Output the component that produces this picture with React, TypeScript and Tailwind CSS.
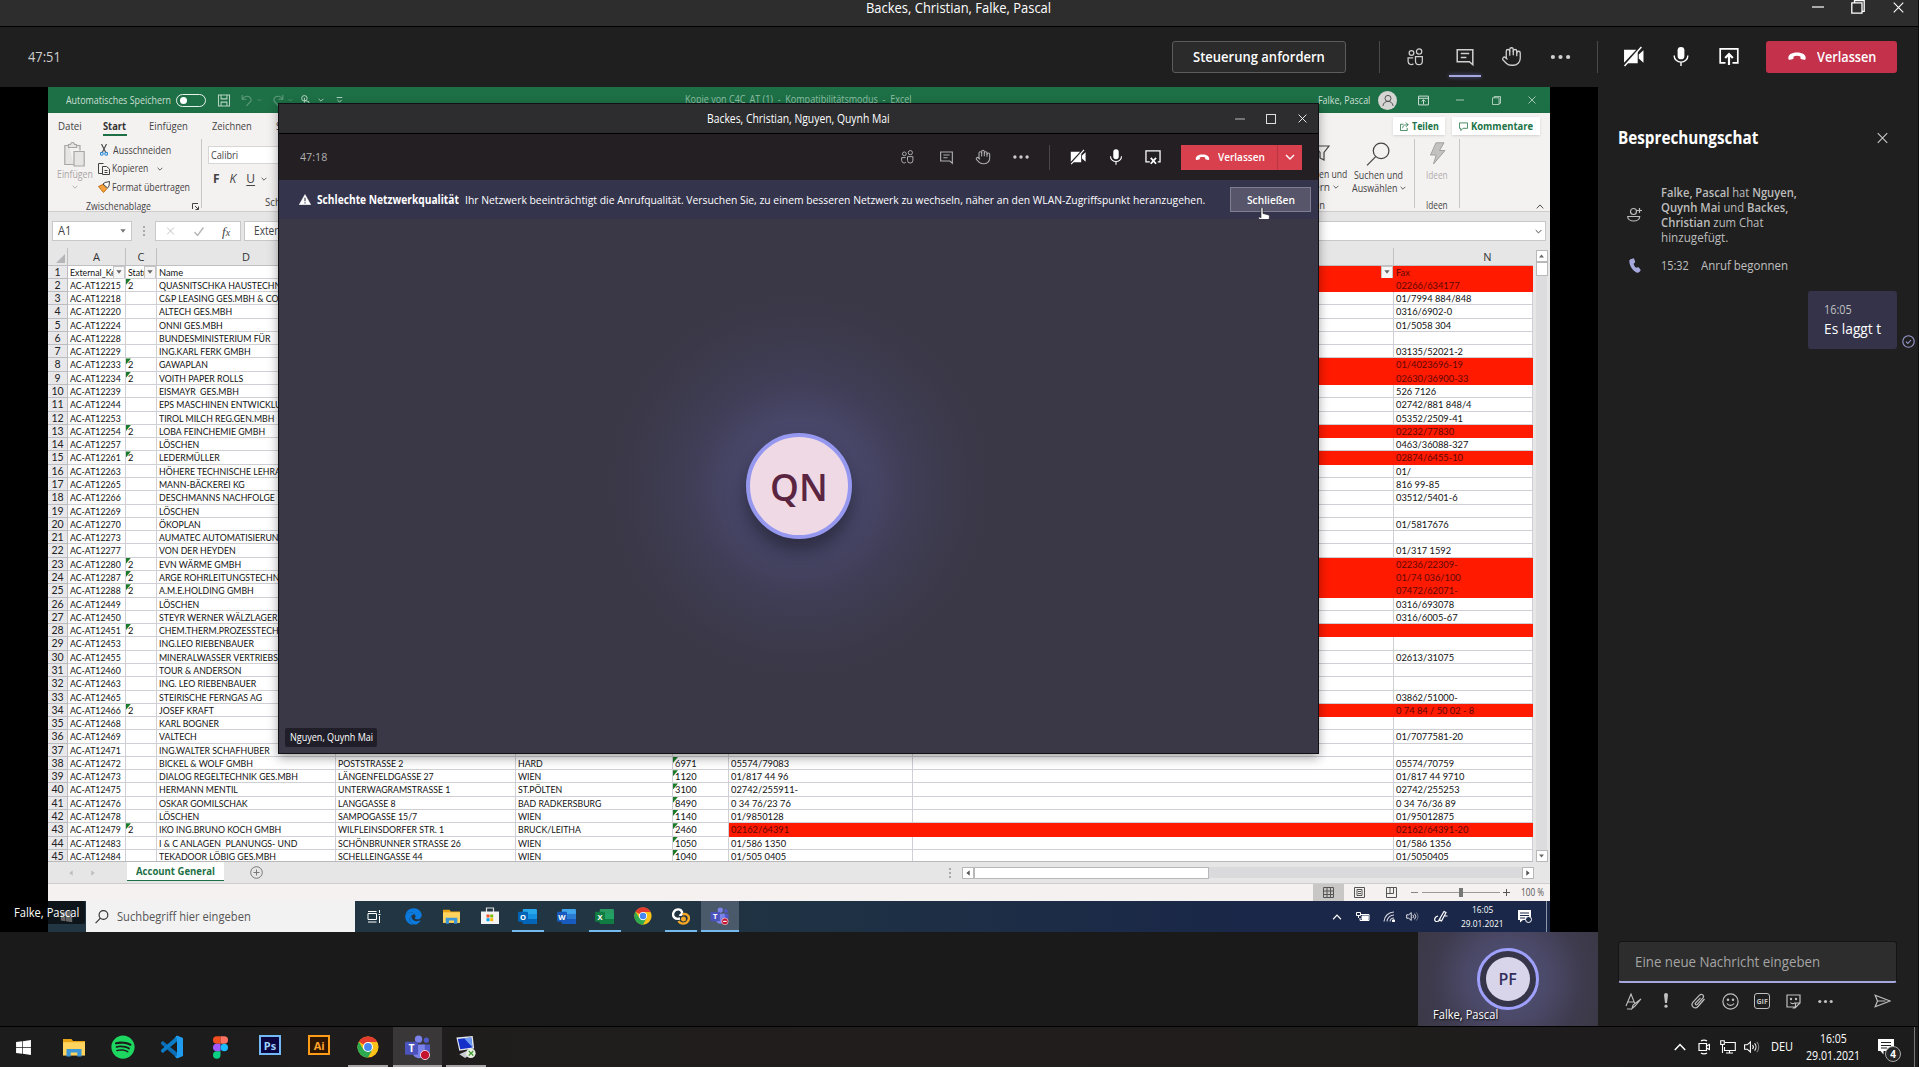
import { useLayoutEffect, useRef, useState, type ReactNode } from "react";
import { Hand } from "lucide-react";
import { FaEdge, FaSpotify, FaWindows } from "react-icons/fa";

/* One line of text, condensed or stretched to an exact width. */
function T({ w, className = "", children }: { w: number; className?: string; children: ReactNode }) {
  const ref = useRef<HTMLSpanElement>(null);
  const [k, setK] = useState(1);
  useLayoutEffect(() => {
    if (ref.current) setK(w / ref.current.offsetWidth);
  }, [w]);
  return (
    <span className={`block shrink-0 whitespace-nowrap ${className}`} style={{ width: w }}>
      <span ref={ref} className="inline-block origin-left" style={{ transform: `scaleX(${k})` }}>
        {children}
      </span>
    </span>
  );
}

type IconProps = { className?: string };

function Svg({ className = "", vb = "0 0 20 20", sw = 1.3, children }: IconProps & { vb?: string; sw?: number; children: ReactNode }) {
  return (
    <svg viewBox={vb} fill="none" stroke="currentColor" strokeWidth={sw} className={`block shrink-0 ${className}`}>
      {children}
    </svg>
  );
}

const People = ({ className }: IconProps) => (
  <Svg className={className}>
    <circle cx="5.8" cy="5.8" r="2.5" />
    <circle cx="13.8" cy="4.2" r="2.8" />
    <path d="M10 9.5h7.2v5a3.6 3.6 0 0 1-7.2 0zM7.6 10.8H2.2v3.8a3.4 3.4 0 0 0 5.6 2.5" />
  </Svg>
);
const Chat = ({ className }: IconProps) => (
  <Svg className={className} sw={1.5}>
    <path d="M2.2 2.7h15.6v15l-3.4-3H2.2zM5.8 6.6h8.4M5.8 10.4h5.6" />
  </Svg>
);
const Dots = ({ className }: IconProps) => (
  <Svg className={className}>
    <g fill="currentColor" stroke="none">
      <circle cx="2.4" cy="10" r="2.1" />
      <circle cx="10" cy="10" r="2.1" />
      <circle cx="17.6" cy="10" r="2.1" />
    </g>
  </Svg>
);
const CamOff = ({ className }: IconProps) => (
  <Svg className={className}>
    <path d="M1 3.5h11.6L1 16zM14 5.2v11.300H3.700zM15 8l4.500-4v12L15 12z" fill="currentColor" stroke="none" />
    <path d="M1.5 19L17.5 1" strokeWidth="1.400" />
  </Svg>
);
const Mic = ({ className }: IconProps) => (
  <Svg className={className} sw={1.4}>
    <rect x="6.600" y="0.4" width="6.800" height="12.400" rx="3.400" fill="currentColor" stroke="none" />
    <path d="M3.2 9v.6a6.800 6 0 0 0 13.600 0V9M10 15.8v3.800" />
  </Svg>
);
const Share = ({ className }: IconProps) => (
  <Svg className={className} sw={1.7}>
    <path d="M6.5 16.4H1.2V2.4h17.6v14h-5.3" />
    <path d="M10 18.6V8M6.2 11.6L10 7.6l3.8 4" strokeWidth="2.2" />
  </Svg>
);
const ShareStop = ({ className }: IconProps) => (
  <Svg className={className} sw={1.6}>
    <path d="M6 16.2H1.2V2.4h17.6v13.8H16" />
    <path d="M7.2 11l6.6 7.4M13.8 11l-6.6 7.4" strokeWidth="2.2" />
  </Svg>
);
const HangUp = ({ className }: IconProps) => (
  <Svg className={className} vb="0 0 20 10">
    <path d="M0.4 7.6C-.2 3 4 .6 10 .6s10.200 2.400 9.600 7c-.1.900-.7 1.300-1.500 1.100l-3-.7c-.9-.2-1.300-.7-1.300-1.500V4.900c-2.400-.8-5.200-.8-7.600 0v1.600c0 .8-.4 1.300-1.300 1.500l-3 .7c-.8.2-1.400-.2-1.500-1.100z" fill="currentColor" stroke="none" />
  </Svg>
);
const Cross = ({ className }: IconProps) => (
  <Svg className={className} vb="0 0 12 12" sw={1.2}>
    <path d="M.8.8l10.400 10.400M11.200.8L.8 11.200" />
  </Svg>
);
const Minus = ({ className }: IconProps) => (
  <Svg className={className} vb="0 0 12 12" sw={1.2}>
    <path d="M0 6h12" />
  </Svg>
);
const Restore = ({ className }: IconProps) => (
  <Svg className={className} vb="0 0 14 14" sw={1.3}>
    <path d="M.8 2.800h10.200v10.400H.8zM3.500 2.800V.7h9.700v10.600H11" />
  </Svg>
);
const Caret = ({ className }: IconProps) => (
  <Svg className={className} vb="0 0 10 6" sw={1.4}>
    <path d="M1 1l4 4 4-4" />
  </Svg>
);
const CaretUp = ({ className }: IconProps) => (
  <Svg className={className} vb="0 0 12 8" sw={1.5}>
    <path d="M.8 7L6 1.500 11.200 7" />
  </Svg>
);
const Lens = ({ className }: IconProps) => (
  <Svg className={className} vb="0 0 24 24" sw={1.2}>
    <circle cx="14.500" cy="8.500" r="7.500" />
    <path d="M9.300 14L1 22.500" />
  </Svg>
);
const Tri = ({ className }: IconProps) => (
  <svg viewBox="0 0 8 6" className={`block shrink-0 ${className}`}>
    <path d="M0 .5h8L4 5.500z" fill="currentColor" />
  </svg>
);
const Speaker = ({ className }: IconProps) => (
  <Svg className={className} vb="0 0 16 14" sw={1.1}>
    <path d="M.6 4.800h2.600L6.400 2v10L3.200 9.200H.6zM8.500 5a3 3 0 0 1 0 4M10.600 3.400a5.400 5.400 0 0 1 0 7.200" />
    <path d="M12.800 1.800a8 8 0 0 1 0 10.400" opacity=".45" />
  </Svg>
);
const Folder = ({ className }: IconProps) => (
  <svg viewBox="0 0 22 20" preserveAspectRatio="none" className={`block shrink-0 ${className}`}>
    <path d="M0 1h8.500l1.500 2.200H22V18H0z" fill="#e8a317" />
    <path d="M0 4.400h22V18.500H0z" fill="#ffd45e" />
    <path d="M3.500 19.500v-8h15v8h-4.200v-4.200H7.700v4.200z" fill="#3b97d8" />
  </svg>
);
const Chrome = ({ className }: IconProps) => (
  <svg viewBox="0 0 24 24" className={`block shrink-0 ${className}`}>
    <circle cx="12" cy="12" r="11.500" fill="#fbc116" />
    <path d="M12 12L2.040 6.250A11.500 11.500 0 0 1 21.960 6.250L22 6.600H12z" fill="#e33b2e" />
    <path d="M2.040 6.250A11.500 11.500 0 0 0 12 23.500l4.800-8.800L12 12 7 14.600z" fill="#2da94f" />
    <circle cx="12" cy="12" r="5.500" fill="#fff" />
    <circle cx="12" cy="12" r="4.300" fill="#4688f1" />
  </svg>
);
function Teams({ className = "", busy }: IconProps & { busy?: boolean }) {
  return (
    <svg viewBox="0 0 24 24" className={`block shrink-0 ${className}`}>
      <circle cx="13" cy="4" r="3.500" fill="#7b83eb" />
      <circle cx="20.500" cy="5" r="2.500" fill="#5059c9" />
      <path d="M16 9h8v6a4.500 4.500 0 0 1-8 2.500z" fill="#5059c9" />
      <path d="M8 9h11v7.500a6 6 0 0 1-11 3z" fill="#7b83eb" />
      <rect x="0" y="6.500" width="12.500" height="12.500" rx="1" fill="#4b53bc" />
      <text x="6.200" y="16.400" textAnchor="middle" fontSize="10" fontWeight="700" fontFamily="Open Sans, sans-serif" fill="#fff">T</text>
      <circle cx="19.200" cy="19.200" r="4.400" fill="#c4122f" stroke="#f3d6da" strokeWidth=".9" />
      {busy && <path d="M16.800 19.200h4.800" stroke="#fff" strokeWidth="1.500" />}
    </svg>
  );
}
function Office({ letter, base, light, dark }: { letter: string; base: string; light: string; dark: string }) {
  return (
    <svg viewBox="0 0 20 18" className="block h-[17px] w-[19px] shrink-0">
      <rect x="5" y="1" width="15" height="16" rx="1" fill={light} />
      <path d="M5 6.300h15v5.400H5z" fill={base} />
      <path d="M5 11.700h15V16a1 1 0 0 1-1 1H5z" fill={dark} />
      <rect x="0" y="4" width="10.500" height="10.500" rx="1" fill={dark} />
      <text x="5.200" y="12.300" textAnchor="middle" fontSize="8" fontWeight="700" fontFamily="Open Sans, sans-serif" fill="#fff">{letter}</text>
    </svg>
  );
}

/* ------------------------------ outer Teams window ------------------------------ */

function TitleBar() {
  return (
    <div className="flex h-[27px] shrink-0 border-b border-black bg-[#2d2d2d] text-white">
      <div className="flex h-[15px] w-full items-center pl-[866px] pr-[14px] text-[14px] leading-none">
        <T w={185}>Backes, Christian, Falke, Pascal</T>
        <Minus className="ml-auto mt-[-2px] h-[12px] w-[12px]" />
        <Restore className="ml-[27px] mt-[-1px] h-[14px] w-[14px]" />
        <Cross className="ml-[28px] h-[11px] w-[11px]" />
      </div>
    </div>
  );
}

function CallBar() {
  return (
    <div className="flex h-[60px] shrink-0 items-center bg-[#1f1f1f] pr-[21px] pb-px pl-[28px] text-[#d0d0d0]">
      <T w={33} className="text-[14px]">47:51</T>
      <div className="ml-auto flex h-[32px] w-[174px] items-center justify-center rounded-[3px] border border-[#5c5c5c] bg-[#2b2b2b] text-[14px] font-semibold text-white">
        <T w={132}>Steuerung anfordern</T>
      </div>
      <div className="ml-[33px] h-[32px] w-px bg-[#4a4a4a]" />
      <People className="ml-[26px] h-[20px] w-[19px]" />
      <div className="relative ml-[30px]">
        <Chat className="h-[20px] w-[20px]" />
        <div className="absolute top-[28px] -left-[6px] h-[2px] w-[32px] bg-[#a6a7dc] shadow-[0_0_4px_#6264a7]" />
      </div>
      <Hand className="ml-[26px] h-[21px] w-[21px]" strokeWidth={1.500} />
      <Dots className="ml-[28px] h-[20px] w-[21px]" />
      <div className="ml-[26px] h-[32px] w-px bg-[#4a4a4a]" />
      <CamOff className="ml-[25px] h-[21px] w-[21px] text-white" />
      <Mic className="ml-[27px] h-[21px] w-[20px] text-white" />
      <Share className="ml-[28px] h-[21px] w-[20px] text-white" />
      <div className="ml-[27px] flex h-[32px] w-[131px] items-center rounded-[3px] bg-[#c4314b] pl-[21px] text-[14px] font-semibold text-white">
        <HangUp className="mr-[10px] h-[9px] w-[20px]" />
        <T w={59}>Verlassen</T>
      </div>
    </div>
  );
}

/* ------------------------------ spreadsheet ------------------------------ */

function ExcelTitle() {
  return (
    <div className="flex h-[26px] shrink-0 items-center bg-[#1d6f46] pl-[18px] text-[10.5px] leading-none text-[#c9dfd2]">
      <T w={105}>Automatisches Speichern</T>
      <div className="ml-[5px] flex h-[13px] w-[30px] items-center rounded-full border border-white/90 pl-[3px]">
        <div className="h-[7px] w-[7px] rounded-full bg-white" />
      </div>
      <Svg className="ml-[11px] h-[13px] w-[14px] text-[#b5d4c2]" sw={1.6}>
        <path d="M1.500 1.500h17v17h-17zM5.500 1.500v6h9v-6M5.500 18.500v-6h9v6" />
      </Svg>
      <Svg className="ml-[10px] h-[13px] w-[12px] text-[#5f9c7c]" sw={1.8}>
        <path d="M2 1v7h7M2.500 7.500C8-1 19 4 16.500 11L9 19" />
      </Svg>
      <Caret className="ml-[4px] h-[4px] w-[5px] text-[#5f9c7c]" />
      <Svg className="ml-[10px] h-[13px] w-[12px] text-[#5f9c7c]" sw={1.8}>
        <path d="M18 1v7h-7M17.500 7.500C12-1 1 4 3.500 11L11 19" />
      </Svg>
      <Caret className="ml-[4px] h-[4px] w-[5px] text-[#5f9c7c]" />
      <Svg className="ml-[7px] h-[13px] w-[11px] text-[#b5d4c2]" sw={1.8}>
        <circle cx="8" cy="6" r="5" />
        <path d="M8 14V5M8 10l8 2v4l-3 4H8l-4-5" />
      </Svg>
      <Caret className="ml-[7px] h-[4px] w-[6px]" />
      <Svg className="ml-[12px] h-[8px] w-[7px]" sw={2.500}>
        <path d="M2 3h16M4 10l6 6 6-6" />
      </Svg>
      <T w={227} className="ml-[342px] -mt-px text-[#8fbfa5]">Kopie von C4C_AT (1)&nbsp; -&nbsp; Kompatibilitätsmodus&nbsp; -&nbsp; Excel</T>
      <T w={52} className="ml-[406px] mt-px">Falke, Pascal</T>
      <div className="ml-[8px] flex h-[19px] w-[19px] items-center justify-center rounded-full bg-[#d5d5d3] text-[#4d4d4d]">
        <Svg className="h-[13px] w-[12px]" sw={1.600}>
          <circle cx="10" cy="6.500" r="5" />
          <path d="M1.500 19c1-10 16-10 17 0" />
        </Svg>
      </div>
      <Svg className="ml-[21px] h-[11px] w-[11px]" sw={1.800}>
        <path d="M1 2h18v16H1zM1 6h18M10 17V9M6.500 12L10 8.500l3.500 3.500" />
      </Svg>
      <Minus className="ml-[27px] h-[8px] w-[8px]" />
      <Restore className="ml-[28px] h-[9px] w-[9px]" />
      <Cross className="ml-[27px] h-[8px] w-[8px]" />
    </div>
  );
}

const Rule = ({ className = "" }: IconProps) => <div className={`h-[69px] w-px shrink-0 bg-[#c8c6c4] ${className}`} />;

function Ribbon() {
  return (
    <div className="flex h-[99px] shrink-0 flex-col border-b border-[#cfcdcb] bg-[#f4f1f1] text-[10.5px] leading-none text-[#444] shadow-sm">
      <div className="flex h-[26px] shrink-0 items-center pl-[10px]">
        <T w={24}>Datei</T>
        <div className="relative ml-[21px] font-bold text-[#333]">
          <T w={23}>Start</T>
          <div className="absolute top-[13px] left-0 h-[2px] w-[24px] bg-[#1d6f46]" />
        </div>
        <T w={39} className="ml-[23px]">Einfügen</T>
        <T w={40} className="ml-[24px]">Zeichnen</T>
        <T w={58} className="ml-[24px]">Seitenlayout</T>
        <div className="ml-auto flex h-[18px] w-[52px] items-center justify-center gap-[3px] bg-white font-bold text-[#217346] shadow-sm">
          <Svg className="h-[9px] w-[9px]" sw={1.800}>
            <path d="M8 5H1v14h15v-6M6 14c0-6 3-8 12-8M13 1l5 5-5 5" />
          </Svg>
          <T w={27}>Teilen</T>
        </div>
        <div className="mr-[10px] ml-[7px] flex h-[18px] w-[88px] items-center justify-center gap-[3px] bg-white font-bold text-[#217346] shadow-sm">
          <Svg className="h-[9px] w-[9px]" sw={1.800}>
            <path d="M1 2h18v12H9l-5 5v-5H1z" />
          </Svg>
          <T w={62}>Kommentare</T>
        </div>
      </div>
      <div className="flex h-[72px] items-start">
        <div className="ml-[8px] flex w-[37px] flex-col items-center pt-[3px] text-[#a9a7a6]">
          <Svg className="h-[25px] w-[21px]" vb="0 0 21 25" sw={1.200}>
            <path d="M5 3.500H.800v19h9M12 3.500h4v5M4.500 5.500h8v-3h-2a2 2 0 0 0-4 0h-2zM10 9.500h10.200v14.500H10z" fill="#e6e5e4" />
          </Svg>
          <T w={36} className="mt-[2px]">Einfügen</T>
          <Caret className="mt-[5px] h-[4px] w-[6px]" />
        </div>
        <div className="ml-[5px] flex flex-col pt-[2px]">
          <div className="flex h-[18px] items-center">
            <Svg className="mr-[5px] ml-[2px] h-[12px] w-[8px]" vb="0 0 8 12" sw={1.100}>
              <path d="M1.500 0l4 8M6.500 0l-4 8" />
              <g stroke="#2b88d8"><circle cx="1.800" cy="9.800" r="1.400" /><circle cx="6.200" cy="9.800" r="1.400" /></g>
            </Svg>
            <T w={58}>Ausschneiden</T>
          </div>
          <div className="flex h-[19px] items-center">
            <Svg className="mr-[2px] h-[12px] w-[12px]" vb="0 0 12 12" sw={1}>
              <path d="M4 10.500H.5V.5h5M4.500 3.500h4l3 2.500v5.500h-7zM6.500 7.500h3M6.500 9.500h3" />
            </Svg>
            <T w={36}>Kopieren</T>
            <Caret className="ml-[9px] h-[4px] w-[6px]" />
          </div>
          <div className="flex h-[18px] items-center">
            <svg viewBox="0 0 12 12" className="mr-[2px] h-[12px] w-[12px]">
              <path d="M.5 5.500L5 3.500l4 4-3.500 4z" fill="#f3a23f" stroke="#c96f12" />
              <path d="M5 3l2-1.500L11.500.5 11 5 9.500 7z" fill="#fff" stroke="#444" />
            </svg>
            <T w={78}>Format übertragen</T>
          </div>
          <div className="mt-[5px] flex items-center">
            <T w={65} className="-ml-[12px]">Zwischenablage</T>
            <Svg className="ml-[41px] h-[7px] w-[7px]" vb="0 0 7 7" sw={1}>
              <path d="M.5 6V.5H6M3 3l3.500 3.500M6.500 3.500v3h-3" />
            </Svg>
          </div>
        </div>
        <Rule className="ml-[2px]" />
        <div className="ml-[6px] flex flex-col pt-[7px]">
          <div className="flex h-[18px] w-[100px] items-center border border-[#d8d6d4] bg-white pl-[2px]">
            <T w={27}>Calibri</T>
          </div>
          <div className="mt-[6px] flex h-[18px] items-center gap-[10px] pl-[5px] text-[12px]">
            <span className="font-bold">F</span>
            <span className="italic">K</span>
            <span className="underline underline-offset-2">U</span>
            <Caret className="-ml-[4px] h-[4px] w-[6px]" />
          </div>
          <T w={42} className="mt-[9px] ml-[57px]">Schriftart</T>
        </div>
        <div className="ml-auto flex w-[60px] flex-col items-end pt-[3px]">
          <Svg className="mr-[17px] h-[22px] w-[16px]" vb="0 0 16 20" sw={1.200}>
            <path d="M1 3h14l-5 6.500V17l-4-2V9.500z" />
          </Svg>
          <T w={55} className="mt-[5px]">Sortieren und</T>
          <div className="mt-[2px] mr-[8px] flex items-center gap-[3px]">
            <T w={30}>Filtern</T>
            <Caret className="h-[4px] w-[6px]" />
          </div>
          <T w={48} className="mt-[8px] mr-[22px]">Bearbeiten</T>
        </div>
        <div className="ml-[4px] flex w-[55px] flex-col items-center pt-[3px]">
          <Lens className="h-[25px] w-[25px]" />
          <T w={49} className="mt-[3px]">Suchen und</T>
          <div className="mt-[2px] flex items-center gap-[3px]">
            <T w={45}>Auswählen</T>
            <Caret className="h-[4px] w-[6px]" />
          </div>
        </div>
        <Rule className="ml-[8px]" />
        <div className="flex w-[44px] flex-col items-center pt-[3px]">
          <svg viewBox="0 0 17 23" className="h-[23px] w-[17px]">
            <path d="M7 .8h8L10.500 8.500H16L4.500 22l2.700-9H1.500z" fill="#c4c2c1" stroke="#a3a1a0" />
          </svg>
          <T w={22} className="mt-[5px] text-[#b0aeac]">Ideen</T>
          <T w={22} className="mt-[19px]">Ideen</T>
        </div>
        <Rule />
        <CaretUp className="mt-[65px] mr-[6px] ml-[76px] h-[5px] w-[8px]" />
      </div>
    </div>
  );
}

function FormulaBar() {
  return (
    <div className="flex h-[36px] shrink-0 items-center bg-[#e6e6e7] pt-[2px] pl-[4px] text-[12px] text-[#444]">
      <div className="flex h-[20px] w-[80px] items-center border border-[#c8c8c8] bg-white pr-[5px] pl-[5px]">
        <T w={13}>A1</T>
        <Tri className="ml-auto h-[4px] w-[6px] text-[#777]" />
      </div>
      <div className="ml-[11px] h-[10px] border-l-2 border-dotted border-[#aaa]" />
      <div className="ml-[10px] flex h-[20px] w-[86px] items-center border border-[#c8c8c8] bg-white pl-[10px] text-[#b5b5b5]">
        <Cross className="h-[8px] w-[9px]" />
        <Svg className="ml-[19px] h-[9px] w-[10px]" vb="0 0 10 9" sw={1.400}><path d="M.5 5L3.500 8.500 9.500.5" /></Svg>
        <span className="ml-[18px] font-[Liberation_Serif,serif] text-[13px] leading-none text-[#444] italic">f<span className="text-[10px]">x</span></span>
      </div>
      <div className="ml-[3px] flex h-[20px] w-[1302px] items-center border border-[#c8c8c8] bg-white pr-[3px] pl-[9px]">
        <T w={60}>External_Key</T>
        <Caret className="ml-auto h-[5px] w-[7px]" />
      </div>
    </div>
  );
}

type Row = [string, boolean, string, string?, string?, string?, string?, string?];
const ROWS: Row[] = [
  ["AC-AT12215", true, "QUASNITSCHKA HAUSTECHNIK", "", "", "", "", "02266/634177"],
  ["AC-AT12218", false, "C&P LEASING GES.MBH & CO KG", "", "", "", "", "01/7994 884/848"],
  ["AC-AT12220", false, "ALTECH GES.MBH", "", "", "", "", "0316/6902-0"],
  ["AC-AT12224", false, "ONNI GES.MBH", "", "", "", "", "01/5058 304"],
  ["AC-AT12228", false, "BUNDESMINISTERIUM FÜR"],
  ["AC-AT12229", false, "ING.KARL FERK GMBH", "", "", "", "", "03135/52021-2"],
  ["AC-AT12233", true, "GAWAPLAN", "", "", "", "", "01/4023696-19"],
  ["AC-AT12234", true, "VOITH PAPER ROLLS", "", "", "", "", "02630/36900-33"],
  ["AC-AT12239", false, "EISMAYR  GES.MBH", "", "", "", "", "526 7126"],
  ["AC-AT12244", false, "EPS MASCHINEN ENTWICKLUNG", "", "", "", "", "02742/881 848/4"],
  ["AC-AT12253", false, "TIROL MILCH REG.GEN.MBH", "", "", "", "", "05352/2509-41"],
  ["AC-AT12254", true, "LOBA FEINCHEMIE GMBH", "", "", "", "", "02232/77830"],
  ["AC-AT12257", false, "LÖSCHEN", "", "", "", "", "0463/36088-327"],
  ["AC-AT12261", true, "LEDERMÜLLER", "", "", "", "", "02874/6455-10"],
  ["AC-AT12263", false, "HÖHERE TECHNISCHE LEHRANSTALT", "", "", "", "", "01/"],
  ["AC-AT12265", false, "MANN-BÄCKEREI KG", "", "", "", "", "816 99-85"],
  ["AC-AT12266", false, "DESCHMANNS NACHFOLGE", "", "", "", "", "03512/5401-6"],
  ["AC-AT12269", false, "LÖSCHEN"],
  ["AC-AT12270", false, "ÖKOPLAN", "", "", "", "", "01/5817676"],
  ["AC-AT12273", false, "AUMATEC AUTOMATISIERUNG"],
  ["AC-AT12277", false, "VON DER HEYDEN", "", "", "", "", "01/317 1592"],
  ["AC-AT12280", true, "EVN WÄRME GMBH", "", "", "", "", "02236/22309-"],
  ["AC-AT12287", true, "ARGE ROHRLEITUNGSTECHNIK", "", "", "", "", "01/74 036/100"],
  ["AC-AT12288", true, "A.M.E.HOLDING GMBH", "", "", "", "", "07472/62071-"],
  ["AC-AT12449", false, "LÖSCHEN", "", "", "", "", "0316/693078"],
  ["AC-AT12450", false, "STEYR WERNER WÄLZLAGER-U", "", "", "", "", "0316/6005-67"],
  ["AC-AT12451", true, "CHEM.THERM.PROZESSTECHNIK"],
  ["AC-AT12453", false, "ING.LEO RIEBENBAUER"],
  ["AC-AT12455", false, "MINERALWASSER VERTRIEBSGES", "", "", "", "", "02613/31075"],
  ["AC-AT12460", false, "TOUR & ANDERSON"],
  ["AC-AT12463", false, "ING. LEO RIEBENBAUER"],
  ["AC-AT12465", false, "STEIRISCHE FERNGAS AG", "", "", "", "", "03862/51000-"],
  ["AC-AT12466", true, "JOSEF KRAFT", "", "", "", "", "0 74 84 / 50 02 - 8"],
  ["AC-AT12468", false, "KARL BOGNER"],
  ["AC-AT12469", false, "VALTECH", "", "", "", "", "01/7077581-20"],
  ["AC-AT12471", false, "ING.WALTER SCHAFHUBER"],
  ["AC-AT12472", false, "BICKEL & WOLF GMBH", "POSTSTRASSE 2", "HARD", "6971", "05574/79083", "05574/70759"],
  ["AC-AT12473", false, "DIALOG REGELTECHNIK GES.MBH", "LÄNGENFELDGASSE 27", "WIEN", "1120", "01/817 44 96", "01/817 44 9710"],
  ["AC-AT12475", false, "HERMANN MENTIL", "UNTERWAGRAMSTRASSE 1", "ST.PÖLTEN", "3100", "02742/255911-", "02742/255253"],
  ["AC-AT12476", false, "OSKAR GOMILSCHAK", "LANGGASSE 8", "BAD RADKERSBURG", "8490", "0 34 76/23 76", "0 34 76/36 89"],
  ["AC-AT12478", false, "LÖSCHEN", "SAMPOGASSE 15/7", "WIEN", "1140", "01/9850128", "01/95012875"],
  ["AC-AT12479", true, "IKO ING.BRUNO KOCH GMBH", "WILFLEINSDORFER STR. 1", "BRUCK/LEITHA", "2460", "02162/64391", "02162/64391-20"],
  ["AC-AT12483", false, "I & C ANLAGEN  PLANUNGS- UND", "SCHÖNBRUNNER STRASSE 26", "WIEN", "1050", "01/586 1350", "01/586 1356"],
  ["AC-AT12484", false, "TEKADOOR LÖBIG GES.MBH", "SCHELLEINGASSE 44", "WIEN", "1040", "01/505 0405", "01/5050405"],
];
const RED = new Set([1, 2, 8, 9, 13, 15, 23, 24, 25, 28, 34, 43]);
const COLS = "grid grid-cols-[20px_58px_31px_179px_180px_157px_56px_184px_481px_139px]";

function Cell({ text = "", red, mark, filter, digits }: { text?: string; red?: boolean; mark?: boolean; filter?: boolean; digits?: boolean }) {
  return (
    <div className={`relative min-h-0 overflow-hidden border-r border-b pl-[2px] whitespace-pre ${red ? "border-[#ff1a00] bg-[#ff1a00] text-[#5c0900]" : "border-[#d0cfd5] bg-white text-[#111]"}`}>
      <span className={`inline-block origin-left ${digits ? "scale-x-[0.93]" : "scale-x-[0.875]"}`}>{text}</span>
      {mark && <div className="absolute top-0 left-0 h-[6px] w-[5px] bg-[#1a7a2a] [clip-path:polygon(0_0,100%_0,0_100%)]" />}
      {filter && (
        <div className="absolute top-0 right-0 flex h-[13px] w-[12px] items-center justify-center border border-[#c4c4c4] bg-[#f6f6f6]">
          <Tri className="h-[4px] w-[6px] text-[#666]" />
        </div>
      )}
    </div>
  );
}

function SheetRow({ n, r }: { n: number; r?: Row }) {
  const red = RED.has(n);
  return (
    <div className={`${COLS} h-[13.295px] shrink-0 grid-rows-[13.295px]`}>
      <div className="min-h-0 border-r border-b border-[#bdbcc0] bg-[#e8e7ea] text-center text-[10.5px] text-[#222]">{n}</div>
      {r ? (
        <>
          <Cell text={r[0]} />
          <Cell text={r[1] ? "2" : ""} mark={r[1]} digits />
          <Cell text={r[2]} />
          <Cell text={r[3]} />
          <Cell text={r[4]} />
          <Cell text={r[5]} mark={!!r[5]} digits />
          <Cell text={r[6]} red={red} digits />
          <Cell red={red} />
          <Cell text={r[7]} red={red} digits />
        </>
      ) : (
        <>
          <Cell text="External_Key" filter />
          <Cell text="Status" filter />
          <Cell text="Name" digits />
          <Cell />
          <Cell />
          <Cell />
          <Cell red />
          <Cell red filter />
          <Cell text="Fax" red digits />
        </>
      )}
    </div>
  );
}

function Sheet() {
  const heads = ["A", "C", "D", "E", "G", "I", "K", "M"];
  return (
    <div className="flex h-[614px] shrink-0 bg-[#e6e6e7]">
      <div className="flex h-full w-[1485px] flex-col overflow-hidden border-b border-[#b9b8bb] font-[Lato,sans-serif] text-[10px] leading-[13px]">
        <div className={`${COLS} h-[17.5px] shrink-0 text-center font-[Open_Sans,sans-serif] text-[11px] leading-[17px] text-[#333]`}>
          <div className="flex items-end justify-end border-r border-b border-[#c0bfc2] p-[2px]">
            <div className="h-[9px] w-[9px] bg-[#b5b4b6] [clip-path:polygon(100%_0,100%_100%,0_100%)]" />
          </div>
          {heads.map((h) => (
            <div key={h} className="border-r border-b border-[#c0bfc2]">{h}</div>
          ))}
          <div className="border-b border-[#c0bfc2] pl-[48px]">N</div>
        </div>
        <SheetRow n={1} />
        {ROWS.map((r, i) => (
          <SheetRow key={r[0]} n={i + 2} r={r} />
        ))}
      </div>
      <div className="flex w-[17px] flex-col items-center pt-[2px]">
        <div className="flex h-[12px] w-[12px] items-center justify-center border border-[#b8b8b8] bg-white">
          <Tri className="h-[4px] w-[5px] rotate-180 text-[#666]" />
        </div>
        <div className="h-[14px] w-[12px] border border-[#b8b8b8] bg-white" />
        <div className="w-[11px] flex-1 bg-[#dcdbdd]" />
        <div className="flex h-[12px] w-[12px] items-center justify-center border border-[#b8b8b8] bg-white">
          <Tri className="h-[4px] w-[5px] text-[#666]" />
        </div>
      </div>
    </div>
  );
}

function SheetFooter() {
  return (
    <>
      <div className="flex h-[22px] shrink-0 items-center border-b border-[#cfcecf] bg-[#e7e6e7]">
        <Tri className="ml-[20px] h-[4px] w-[6px] rotate-90 text-[#bdbdbd]" />
        <Tri className="ml-[16px] h-[4px] w-[6px] -rotate-90 text-[#bdbdbd]" />
        <div className="mb-[2px] ml-[31px] flex h-[19px] w-[97px] items-center justify-center border-b-[1.500px] border-[#1d6f46] bg-white pt-px text-[11px] font-bold text-[#1d6f46]">
          <T w={79}>Account General</T>
        </div>
        <Svg className="ml-[26px] h-[13px] w-[13px] text-[#777]" vb="0 0 13 13" sw={1}>
          <circle cx="6.500" cy="6.500" r="5.800" />
          <path d="M6.500 3.500v6M3.500 6.500h6" />
        </Svg>
        <div className="ml-auto h-[10px] border-l-2 border-dotted border-[#aaa]" />
        <div className="ml-[11px] flex h-[12px] w-[12px] items-center justify-center border border-[#b8b8b8] bg-white">
          <Tri className="h-[4px] w-[6px] rotate-90 text-[#555]" />
        </div>
        <div className="h-[12px] w-[235px] border border-[#b8b8b8] bg-white" />
        <div className="h-[11px] w-[313px] bg-[#dad9db]" />
        <div className="mr-[16px] flex h-[12px] w-[12px] items-center justify-center border border-[#b8b8b8] bg-white">
          <Tri className="h-[4px] w-[6px] -rotate-90 text-[#555]" />
        </div>
      </div>
      <div className="flex h-[17px] shrink-0 items-center justify-end bg-[#f4f1f0] text-[10px] text-[#555]">
        <div className="flex h-[17px] w-[31px] items-center justify-center bg-[#c9c7c6]">
          <Svg className="h-[11px] w-[11px]" vb="0 0 11 11" sw={1}><path d="M.5.500h10v10H.5zM4 0v11M7.500 0v11M0 4h11M0 7.500h11" /></Svg>
        </div>
        <Svg className="ml-[10px] h-[11px] w-[11px]" vb="0 0 11 11" sw={1}><path d="M.5.500h10v10H.5zM3 2.500h5v6H3zM4 4.500h3M4 6.500h3" /></Svg>
        <Svg className="ml-[21px] h-[11px] w-[11px]" vb="0 0 11 11" sw={1}><path d="M.5.500h10v10H.5zM4 0v6.500M7.500 0v6.500M.5 6.500h7" /></Svg>
        <Minus className="ml-[14px] h-[7px] w-[7px]" />
        <div className="ml-[4px] flex h-[9px] w-[78px] items-center justify-center">
          <div className="h-px w-[37px] bg-[#999]" />
          <div className="h-[9px] w-[4px] bg-[#777]" />
          <div className="h-px w-[37px] bg-[#999]" />
        </div>
        <Svg className="ml-[3px] h-[7px] w-[7px]" vb="0 0 7 7" sw={1}><path d="M3.500 0v7M0 3.500h7" /></Svg>
        <T w={23} className="mr-[6px] ml-[11px]">100 %</T>
      </div>
    </>
  );
}

function Slot({ on, active, children }: { on?: boolean; active?: boolean; children: ReactNode }) {
  return (
    <div className={`flex h-[31px] w-[38.400px] shrink-0 flex-col items-center ${active ? "bg-[#4a5a6a]" : ""}`}>
      <div className="flex h-[29px] items-center justify-center pt-px">{children}</div>
      <div className={`h-[2px] ${active ? "w-full" : "w-[32px]"} ${on ? "bg-[#76b9ed]" : ""}`} />
    </div>
  );
}

function RemoteTaskbar() {
  return (
    <div className="flex h-[31px] shrink-0 items-center bg-linear-to-r from-[#213542] from-40% to-[#1a2748] to-80% text-white">
      <div className="flex w-[38px] items-center justify-end pr-[13px]">
        <FaWindows className="h-[13px] w-[13px]" />
      </div>
      <div className="flex h-[31px] w-[269px] items-center bg-[#f2f2f3] pl-[9px] text-[12px] text-[#555]">
        <Lens className="h-[14px] w-[14px] text-[#333] [stroke-width:2]" />
        <T w={134} className="ml-[8px]">Suchbegriff hier eingeben</T>
      </div>
      <div className="flex items-center">
        <Slot>
          <Svg className="h-[13px] w-[14px]" vb="0 0 14 13" sw={1}>
            <path d="M1 1.500h8.500M1 3.500h8.500v6H1zM1 12h8.500M12.500 0v3M12.500 6v7M11.500 4.500h2" />
          </Svg>
        </Slot>
        <Slot><FaEdge className="ml-[2px] h-[17px] w-[17px] text-[#0b7be0]" /></Slot>
        <Slot><Folder className="ml-[2px] h-[15px] w-[17px]" /></Slot>
        <Slot>
          <svg viewBox="0 0 18 18" className="ml-[2px] h-[18px] w-[18px]">
            <path d="M5.500 5V1h7v4" stroke="#ddd" strokeWidth="1.200" fill="none" />
            <path d="M0 4.500h18V17H0z" fill="#f3f3f3" />
            <path d="M5.500 7.500h3v3h-3z" fill="#f25022" /><path d="M9.200 7.500h3v3h-3z" fill="#7fba00" />
            <path d="M5.500 11.200h3v3h-3z" fill="#00a4ef" /><path d="M9.200 11.200h3v3h-3z" fill="#ffb900" />
          </svg>
        </Slot>
        <Slot on><Office letter="O" base="#1490df" light="#28a8ea" dark="#0364b8" /></Slot>
        <Slot><Office letter="W" base="#2b7cd3" light="#41a5ee" dark="#185abd" /></Slot>
        <Slot on><Office letter="X" base="#21a366" light="#2a9a63" dark="#107c41" /></Slot>
        <Slot><Chrome className="h-[18px] w-[18px]" /></Slot>
        <Slot on>
          <Svg className="h-[17px] w-[18px]" vb="0 0 18 17" sw={2.400}>
            <path d="M8 10.500C3 12-.5 8 1.800 4c2-3.500 7-3.500 8.200 0 .6 2-1 3.500-2.500 2.500" />
            <path d="M10.500 6.500C15 4.500 18.500 9 16 13c-2 3.500-7.500 3.500-9.500 0" stroke="#f5a623" />
            <circle cx="11.500" cy="11" r="1.300" stroke="#f5a623" />
          </Svg>
        </Slot>
        <Slot on active><Teams className="h-[18px] w-[19px]" busy /></Slot>
      </div>
      <CaretUp className="ml-auto h-[6px] w-[10px]" />
      <Svg className="ml-[14px] h-[11px] w-[14px]" vb="0 0 14 11" sw={1}>
        <path d="M5 3.500h8v6H4V7" /><path d="M6 5h6v3.500H6z" fill="currentColor" /><path d="M.5 1.500h4v3h-4zM2.500 4.500V7" />
      </Svg>
      <Svg className="ml-[13px] h-[11px] w-[12px]" vb="0 0 12 11" sw={1.100}>
        <path d="M1 10.500A10 10 0 0 1 11 1M4 10.500a7 7 0 0 1 7-6.500M7 10.500A4 4 0 0 1 11 7" opacity=".8" />
        <circle cx="10.500" cy="9.800" r="1" fill="currentColor" />
      </Svg>
      <Speaker className="ml-[11px] h-[11px] w-[13px]" />
      <Svg className="ml-[15px] h-[13px] w-[14px]" vb="0 0 14 13" sw={1.200}>
        <path d="M4 6C0 7-.5 11.500 3 11.500S6 8 6 8M5 10L10 1.500l2 1L7.500 11zM10 6h3.500" />
      </Svg>
      <div className="ml-[12px] flex w-[44px] flex-col items-center gap-[3px] text-[9.500px] leading-[11px]">
        <T w={21}>16:05</T>
        <T w={42}>29.01.2021</T>
      </div>
      <Svg className="ml-[14px] h-[13px] w-[14px]" vb="0 0 14 13" sw={1}>
        <path d="M0 0h13v10H5l-3 2.500V10H0z" fill="#fff" stroke="none" />
        <path d="M2 3h9M2 5.500h9M2 8h5" stroke="#1b2b49" />
        <circle cx="10.500" cy="9.500" r="3" fill="#1b2b49" />
      </Svg>
      <div className="mr-[3px] ml-[14px] h-[31px] w-px bg-[#8d97ab]" />
    </div>
  );
}

/* ------------------------------ inner Teams window ------------------------------ */

function InnerCall() {
  return (
    <div className="absolute top-[16px] left-[230px] flex h-[651px] w-[1041px] flex-col border border-[#111014] bg-[#3a3746] text-white shadow-[0_4px_10px_rgba(0,0,0,0.35)]">
      <div className="flex h-[30px] shrink-0 items-center border-b border-black bg-[#2d2d2f] pr-[11px] pl-[428px] text-[12px]">
        <T w={183}>Backes, Christian, Nguyen, Quynh Mai</T>
        <Minus className="ml-auto h-[10px] w-[10px] text-[#bbb]" />
        <div className="ml-[21px] h-[10px] w-[10px] border border-[#ddd]" />
        <Cross className="ml-[22px] h-[9px] w-[9px]" />
      </div>
      <div className="flex h-[46px] shrink-0 items-center bg-[#231f23] pr-[16px] pl-[21px] text-[#b0b0b0]">
        <T w={27} className="text-[11.500px]">47:18</T>
        <People className="ml-auto h-[16px] w-[15px]" />
        <Chat className="ml-[24px] h-[15px] w-[15px]" />
        <Hand className="ml-[21px] h-[16px] w-[16px]" strokeWidth={1.600} />
        <Dots className="ml-[22px] h-[16px] w-[16px] text-[#ccc]" />
        <div className="ml-[20px] h-[25px] w-px bg-[#4a474a]" />
        <CamOff className="ml-[20px] h-[16px] w-[16px] text-white" />
        <Mic className="ml-[22px] h-[16px] w-[16px] text-white" />
        <ShareStop className="ml-[21px] h-[16px] w-[16px] text-white" />
        <div className="ml-[20px] flex h-[25px] w-[121px] items-center bg-[#d9404e] text-[11.500px] font-semibold text-white">
          <HangUp className="ml-[14px] h-[7px] w-[15px]" />
          <T w={47} className="ml-[8px]">Verlassen</T>
          <div className="ml-[12px] h-[25px] w-px bg-[#b93543]" />
          <Caret className="ml-[7px] h-[6px] w-[10px]" />
        </div>
      </div>
      <div className="flex h-[39px] shrink-0 items-center bg-[#35344d] pl-[20px] text-[11.500px]">
        <svg viewBox="0 0 12 11" className="mr-[6px] h-[11px] w-[12px] shrink-0">
          <path d="M6 .5l5.800 10.200H.2z" fill="#fff" stroke="#fff" strokeLinejoin="round" strokeWidth=".5" />
          <path d="M6 3.800v3.400M6 8.200v1.300" stroke="#35344d" strokeWidth="1.100" />
        </svg>
        <T w={142} className="font-bold">Schlechte Netzwerkqualität</T>
        <T w={740} className="ml-[6px]">
          Ihr Netzwerk beeinträchtigt die Anrufqualität. Versuchen Sie, zu einem besseren Netzwerk zu wechseln, näher an den WLAN-Zugriffspunkt heranzugehen.
        </T>
        <div className="relative ml-[25px] flex h-[25px] w-[81px] shrink-0 items-center justify-center border border-[#7f7e93] bg-[#565569] font-semibold">
          <T w={48}>Schließen</T>
          <svg viewBox="0 0 12 18" className="absolute top-[19px] left-[27px] h-[18px] w-[12px]">
            <path d="M3 1.500c0-1.300 2-1.300 2 0v5l5 1.300c1 .3 1.500.8 1.400 1.800L11 13.500 9.800 17H4.500L.8 11.500c-.6-1 .6-2 1.500-1.200l.7.700z" fill="#fff" stroke="#222" strokeWidth=".6" />
          </svg>
        </div>
      </div>
      <div className="relative flex min-h-0 flex-1 items-center justify-center bg-[radial-gradient(circle_at_520px_267px,#504f76_0px,#484769_65px,#413f59_100px,#3c3a4c_150px,#3a3746_195px)]">
        <div className="flex h-[106px] w-[106px] items-center justify-center rounded-full border-[4px] border-[#9698f0] bg-[#efd9e5] text-[38px] font-semibold text-[#5b2541] shadow-[0_12px_20px_rgba(20,20,30,0.55)]">
          <T w={58}>QN</T>
        </div>
        <div className="absolute bottom-[6px] left-[6px] flex h-[19px] w-[92px] items-center justify-center rounded-[2px] bg-[#201e29] text-[11px]">
          <T w={83}>Nguyen, Quynh Mai</T>
        </div>
      </div>
    </div>
  );
}

function Stage() {
  return (
    <div className="flex w-[1598px] shrink-0 flex-col">
      <div className="relative flex h-[845px] justify-center bg-black pr-px">
        <div className="relative ml-px flex w-[1502px] flex-col overflow-hidden bg-[#e6e6e7]">
          <ExcelTitle />
          <Ribbon />
          <FormulaBar />
          <Sheet />
          <SheetFooter />
          <RemoteTaskbar />
          <InnerCall />
        </div>
        <div className="absolute bottom-[8px] left-0 flex h-[23px] w-[85px] items-center rounded-r-[2px] bg-black/60 pl-[14px] text-[12px] text-white">
          <T w={65}>Falke, Pascal</T>
        </div>
      </div>
      <div className="flex h-[94px] justify-end bg-[#1a1a1a]">
        <div className="relative flex w-[180px] items-center justify-center bg-[radial-gradient(circle_at_center,#55537c_0px,#4b4968_40px,#3e3b4e_75px,#3b3846_100px)]">
          <div className="flex h-[62px] w-[62px] items-center justify-center rounded-full border-[3px] border-[#9ea0fb] bg-[#37354a]">
            <div className="flex h-[44px] w-[44px] items-center justify-center rounded-full bg-[#d8d5ea] pr-px text-[16px] font-semibold text-[#332f5c]">
              <T w={18}>PF</T>
            </div>
          </div>
          <T w={65} className="absolute bottom-[2px] left-[15px] text-[12px] text-white [text-shadow:1px_1px_2px_#000]">Falke, Pascal</T>
        </div>
      </div>
    </div>
  );
}

/* ------------------------------ meeting chat ------------------------------ */

function ChatPanel() {
  return (
    <div className="flex min-w-0 flex-1 flex-col bg-[#1f1f1f] pr-[21px] pl-[20px] text-[12px] text-[#c0c0c0]">
      <div className="mt-[38px] flex h-[26px] items-center justify-between pr-[9px] text-[17px] font-bold text-white">
        <T w={140}>Besprechungschat</T>
        <Cross className="h-[12px] w-[11px] text-[#c8c8c8]" />
      </div>
      <div className="mt-[34px] flex items-center pl-[9px] leading-[15px] font-semibold text-[#bdbdbd]">
        <Svg className="mr-[19px] h-[16px] w-[15px]" vb="0 0 15 16" sw={1.200}>
          <circle cx="6.500" cy="4.500" r="3" /><path d="M.700 9.500h12c0 6-12 6-12 0zM12.500 1v5M10 3.500h5" />
        </Svg>
        <div>
          <T w={136}>Falke, Pascal <span className="font-normal">hat</span> Nguyen,</T>
          <T w={127}>Quynh Mai <span className="font-normal">und</span> Backes,</T>
          <T w={102}>Christian <span className="font-normal">zum Chat</span></T>
          <T w={67} className="font-normal">hinzugefügt.</T>
        </div>
      </div>
      <div className="mt-[13px] flex h-[15px] items-center pl-[11px]">
        <svg viewBox="0 0 12 15" className="mr-[20px] h-[15px] w-[12px]">
          <path d="M1.500 1.200L4 .4c.6-.2 1 .1 1.200.6l.9 2.400c.2.500 0 1-.3 1.300L4.600 5.700c.4 1.600 1.300 3 2.500 4.100l1.500-.5c.4-.1.900 0 1.200.3l1.600 2c.3.400.3.900-.1 1.300l-1 1c-.8.800-1.900 1-2.900.5C3.500 12.300.8 8.300.3 3.500c-.1-1 .3-1.900 1.200-2.300z" fill="#a6a7dc" />
        </svg>
        <T w={28}>15:32</T>
        <T w={87} className="ml-[12px]">Anruf begonnen</T>
      </div>
      <div className="relative mt-[18px] ml-auto flex h-[58px] w-[89px] flex-col justify-center rounded-[3px] bg-[#34334a] pb-px pl-[16px]">
        <T w={28} className="leading-[18px]">16:05</T>
        <T w={57} className="text-[14px] leading-[19px] text-white">Es laggt t</T>
        <Svg className="absolute right-[-18px] bottom-[1px] h-[13px] w-[13px] text-[#9a9bd0]" vb="0 0 13 13" sw={1.100}>
          <circle cx="6.500" cy="6.500" r="5.700" /><path d="M4 6.700l1.800 1.800L9 5" />
        </Svg>
      </div>
      <div className="mt-auto flex h-[42px] items-center rounded-[3px] border border-b-2 border-[#141414] border-b-[#a6a7dc] bg-[#2d2d2d] pl-[16px] text-[14px] text-[#a5a5a5]">
        <T w={185}>Eine neue Nachricht eingeben</T>
      </div>
      <div className="mt-[8px] mb-[15px] flex h-[20px] items-center pl-[7px]">
        <Svg className="h-[17px] w-[17px]" vb="0 0 17 17" sw={1.100}>
          <path d="M1 13L6 1l3.800 9.500M2.800 9h6M16 6l-6 7-3 2.500L8 12zM2 16h5" />
        </Svg>
        <Svg className="ml-[20px] h-[16px] w-[8px]" vb="0 0 8 16">
          <path d="M2 2a2 2 0 0 1 4 0L5 10H3z" fill="currentColor" stroke="none" /><circle cx="4" cy="13.200" r="1.600" fill="currentColor" stroke="none" />
        </Svg>
        <Svg className="ml-[20px] h-[16px] w-[16px]" vb="0 0 16 16" sw={1.200}>
          <path d="M14.500 6L8 13.500c-3 3.500-8-.5-5-4.300l6.500-7c2.300-2.300 5.300.5 3.300 2.900L7.300 11.300c-1.200 1.200-2.800 0-1.700-1.400L10.500 4.800" />
        </Svg>
        <Svg className="ml-[16px] h-[17px] w-[17px]" vb="0 0 17 17" sw={1.200}>
          <circle cx="8.500" cy="8.500" r="7.600" /><path d="M5 10.500c1.500 2.400 5.500 2.400 7 0" />
          <circle cx="6" cy="6.800" r=".7" fill="currentColor" /><circle cx="11" cy="6.800" r=".7" fill="currentColor" />
        </Svg>
        <div className="ml-[15px] flex h-[16px] w-[16px] items-center justify-center rounded-[3px] border border-current text-[7px] leading-none font-bold">
          <T w={11}>GIF</T>
        </div>
        <Svg className="ml-[16px] h-[15px] w-[15px]" vb="0 0 15 15" sw={1.200}>
          <path d="M1 1h13v8l-5 5H8l1.500-1H1zM14 9H9.500v5M4.500 8.500c1 1.600 3.500 1.600 4.500 0" />
          <circle cx="5" cy="5" r=".6" fill="currentColor" /><circle cx="10" cy="5" r=".6" fill="currentColor" />
        </Svg>
        <Dots className="ml-[17px] h-[15px] w-[15px]" />
        <Svg className="mr-[6px] ml-auto h-[14px] w-[17px]" vb="0 0 17 14" sw={1.200}>
          <path d="M1.200 1.200L16 7 1.200 12.800 3.500 7zM3.500 7h8" />
        </Svg>
      </div>
    </div>
  );
}

/* ------------------------------ local taskbar ------------------------------ */

function TaskItem({ on, active, children }: { on?: boolean; active?: boolean; children: ReactNode }) {
  return (
    <div className={`flex h-[40px] w-[49.100px] shrink-0 flex-col items-center ${active ? "bg-[#393737]" : ""}`}>
      <div className="flex h-[38px] items-center justify-center pt-[2px]">{children}</div>
      <div className={`h-[2px] ${active ? "w-full" : "w-[40px]"} ${on ? "bg-[#a6a4a4]" : ""}`} />
    </div>
  );
}

function Taskbar() {
  return (
    <div className="flex h-[41px] shrink-0 items-center border-t border-black bg-linear-to-r from-[#1c1c1c] via-[#221d1d] to-[#1c1c1c] text-white">
      <TaskItem><FaWindows className="mr-[3px] h-[17px] w-[17px]" /></TaskItem>
      <TaskItem><Folder className="h-[19px] w-[22px]" /></TaskItem>
      <TaskItem><FaSpotify className="h-[24px] w-[24px] text-[#1ed760]" /></TaskItem>
      <TaskItem>
        <svg viewBox="0 0 24 24" className="h-[24px] w-[24px]">
          <path d="M1 7.500L2.800 6 17 17.500V23L1 9z" fill="#0b6fb8" />
          <path d="M1 16.500L2.800 18 17 6.500V1L1 15z" fill="#0a7cc8" />
          <path d="M17 .5l6 2.500v18l-6 2.500L14.500 21c1.500.8 2.500 0 2.500-1.200V4.200C17 3 16 2.200 14.500 3z" fill="#1f9cf0" />
        </svg>
      </TaskItem>
      <TaskItem>
        <svg viewBox="0 0 16 24" className="h-[23px] w-[15px]">
          <path d="M4 0h4v8H4a4 4 0 0 1 0-8z" fill="#f24e1e" /><path d="M8 0h4a4 4 0 0 1 0 8H8z" fill="#ff7262" />
          <path d="M4 8h4v8H4a4 4 0 0 1 0-8z" fill="#a259ff" /><circle cx="12" cy="12" r="4" fill="#1abcfe" />
          <path d="M4 16h4v4a4 4 0 1 1-4-4z" fill="#0acf83" />
        </svg>
      </TaskItem>
      <TaskItem>
        <div className="mb-[4px] flex h-[20px] w-[22px] items-center justify-center border-2 border-[#72b8f5] bg-[#0a0540] text-[11px] leading-none font-bold text-[#9cd0ff]">Ps</div>
      </TaskItem>
      <TaskItem>
        <div className="mb-[4px] flex h-[20px] w-[22px] items-center justify-center border-2 border-[#ff9c1a] bg-[#2e1500] text-[11px] leading-none font-bold text-[#ffa42e]">Ai</div>
      </TaskItem>
      <TaskItem on><Chrome className="h-[22px] w-[22px]" /></TaskItem>
      <TaskItem on active><Teams className="h-[25px] w-[25px]" /></TaskItem>
      <TaskItem on>
        <svg viewBox="0 0 22 24" className="h-[23px] w-[22px]">
          <path d="M1 1.500L18 0l1.500 13L4 15.500z" fill="#e4e6ea" />
          <path d="M2.500 3L16.500 1.500l1.300 10.500L5 13.800z" fill="#1530c9" />
          <path d="M9 2.300l7.500-.8L17.800 12z" fill="#6f9bf2" />
          <path d="M4 19l7-3 5 3-6 4z" fill="#c9ccd1" />
          <circle cx="16" cy="18" r="5" fill="#e8eee2" />
          <path d="M14 15.500l2 2.500-2 2.500M18.500 15.500l-2 2.500 2 2.500" stroke="#3f9a2e" strokeWidth="1.300" fill="none" />
        </svg>
      </TaskItem>
      <CaretUp className="ml-auto h-[8px] w-[12px]" />
      <Svg className="ml-[12px] h-[16px] w-[12px]" vb="0 0 12 16" sw={1.200}>
        <path d="M1 4.500h7.500v7H1zM8.500 7L11.500 5.500v5L8.500 9M3 2c1.500-1.200 4.500-1.200 6 0M3 14c1.500 1.200 4.500 1.200 6 0" />
      </Svg>
      <Svg className="ml-[10px] h-[14px] w-[16px]" vb="0 0 16 14" sw={1.100}>
        <path d="M5 2.500h10.300v8H4.500V7M6 13h7M9.500 10.500V13M.7.700h3.600v3.800H.7zM2.500 4.500V13" />
      </Svg>
      <Speaker className="ml-[8px] h-[14px] w-[16px]" />
      <T w={22} className="ml-[11px] text-[12px]">DEU</T>
      <div className="ml-[12px] flex w-[56px] flex-col items-center text-[12px] leading-[17px]">
        <T w={27}>16:05</T>
        <T w={54}>29.01.2021</T>
      </div>
      <div className="relative ml-[17px]">
        <Svg className="h-[16px] w-[16px]" vb="0 0 16 16" sw={1}>
          <path d="M0 0h16v12H5.500v3.500L2.500 12H0z" fill="#fff" stroke="none" /><path d="M3 3.500h10M3 6.500h10M3 9h6" stroke="#222" />
        </Svg>
        <div className="absolute top-[7px] left-[7px] flex h-[16px] w-[16px] items-center justify-center rounded-full border border-[#aaa] bg-[#262626] text-[10px] leading-none font-bold">4</div>
      </div>
      <div className="mr-[3px] ml-[20px] h-[40px] w-px bg-[#777]" />
    </div>
  );
}

export default function App() {
  return (
    <div className="flex h-[1069px] w-[1919px] flex-col overflow-hidden bg-white font-[Open_Sans,Noto_Sans,sans-serif]">
      <div className="flex h-[1067px] w-full shrink-0 flex-col border-r border-[#0c0c0c]">
        <TitleBar />
        <CallBar />
        <div className="flex h-[939px] shrink-0">
          <Stage />
          <ChatPanel />
        </div>
        <Taskbar />
      </div>
    </div>
  );
}
